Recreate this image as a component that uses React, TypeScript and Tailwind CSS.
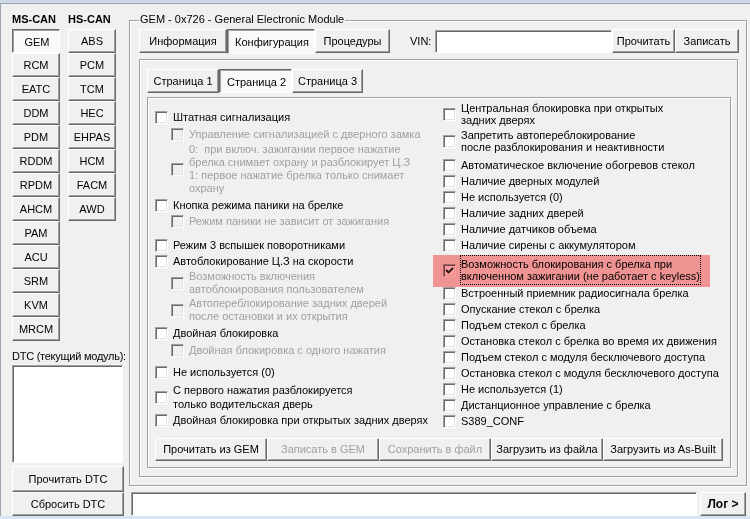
import React from 'react';

const raised =
  "bg-[#f0f0f0] border border-t-white border-l-white border-r-[#696969] border-b-[#696969] shadow-[inset_-1px_-1px_0_#a0a0a0]";
const pressed =
  "bg-[#f9f9f9] border border-t-[#696969] border-l-[#696969] border-r-white border-b-white shadow-[inset_1px_1px_0_#a0a0a0]";
const sunken =
  "bg-white border border-t-[#a0a0a0] border-l-[#a0a0a0] border-r-white border-b-white shadow-[inset_1px_1px_0_#696969]";
const etched = "border border-[#a0a0a0] shadow-[inset_1px_1px_0_#ffffff,1px_1px_0_#ffffff]";

function Btn({
  children,
  className = '',
  down = false,
  disabled = false,
}: {
  children: React.ReactNode;
  className?: string;
  down?: boolean;
  disabled?: boolean;
}) {
  return (
    <div
      className={`${down ? pressed : raised} flex items-center justify-center whitespace-nowrap shrink-0 ${
        disabled ? 'text-[#a0a0a0]' : 'text-black'
      } ${className}`}
    >
      {down ? <span className="translate-x-[1px] translate-y-[1px]">{children}</span> : children}
    </div>
  );
}

function Check({ checked = false, disabled = false }: { checked?: boolean; disabled?: boolean }) {
  return (
    <span
      className={`w-[13px] h-[13px] shrink-0 border border-t-[#a0a0a0] border-l-[#a0a0a0] border-r-white border-b-white shadow-[inset_1px_1px_0_#696969,inset_-1px_-1px_0_#e3e3e3] flex items-center justify-center ${
        disabled ? 'bg-[#f0f0f0]' : 'bg-white'
      }`}
    >
      {checked && (
        <svg width="9" height="9" viewBox="0 0 9 9">
          <path d="M1 4 L3.5 6.5 L8 2" stroke="#222" strokeWidth="1.8" fill="none" />
        </svg>
      )}
    </span>
  );
}

function Row({
  cls,
  lead = 'leading-[13px]',
  sub = false,
  dis = false,
  children,
}: {
  cls: string;
  lead?: string;
  sub?: boolean;
  dis?: boolean;
  children: React.ReactNode;
}) {
  return (
    <div className={`flex items-center gap-[5px] ${sub ? 'pl-[16px]' : ''} ${cls}`}>
      <Check disabled={dis} />
      <div className={`${lead} whitespace-pre ${dis ? 'text-[#a0a0a0]' : 'text-black'}`}>{children}</div>
    </div>
  );
}

const ms = ['GEM', 'RCM', 'EATC', 'DDM', 'PDM', 'RDDM', 'RPDM', 'AHCM', 'PAM', 'ACU', 'SRM', 'KVM', 'MRCM'];
const hs = ['ABS', 'PCM', 'TCM', 'HEC', 'EHPAS', 'HCM', 'FACM', 'AWD'];

const rightSingles1 = [
  'Наличие дверных модулей',
  'Не используется (0)',
  'Наличие задних дверей',
  'Наличие датчиков объема',
  'Наличие сирены с аккумулятором',
];
const rightSingles2 = [
  'Встроенный приемник радиосигнала брелка',
  'Опускание стекол с брелка',
  'Подъем стекол с брелка',
  'Остановка стекол с брелка во время их движения',
  'Подъем стекол с модуля бесключевого доступа',
  'Остановка стекол с модуля бесключевого доступа',
  'Не используется (1)',
  'Дистанционное управление с брелка',
  'S389_CONF',
];

export default function App() {
  return (
    <div className="w-[750px] h-[519px] bg-[#f0f0f0] flex flex-col overflow-hidden font-['Liberation_Sans',Arial,sans-serif] text-[11px] text-black">
      <div className="h-[3px] bg-[#cdd9e6] shrink-0" />
      <div className="flex-1 flex border-t border-l border-[#9aa6b2] min-h-0">
        {/* Left panel */}
        <div className="w-[128px] shrink-0 pl-[11px] pt-[9px] flex flex-col relative z-10">
          <div className="flex gap-[8px] h-[12px] leading-[12px] font-bold">
            <span className="w-[48px]">MS-CAN</span>
            <span>HS-CAN</span>
          </div>
          <div className="flex gap-[8px] mt-[4px] h-[312px]">
            <div className="flex flex-col w-[48px]">
              {ms.map((m, i) => (
                <Btn key={m} down={i === 0} className="h-[24px] w-[48px]">
                  {m}
                </Btn>
              ))}
            </div>
            <div className="flex flex-col w-[48px]">
              {hs.map((m) => (
                <Btn key={m} className="h-[24px] w-[48px]">
                  {m}
                </Btn>
              ))}
            </div>
          </div>
          <div className="mt-[9px] h-[12px] leading-[12px] whitespace-nowrap tracking-[-0.25px]">DTC (текущий модуль):</div>
          <div className={`mt-[3px] w-[111px] h-[98px] ${sunken}`} />
          <Btn className="mt-[3px] w-[112px] h-[26px]">Прочитать DTC</Btn>
          <Btn className="w-[112px] h-[24px]">Сбросить DTC</Btn>
        </div>

        {/* Right part */}
        <div className="flex-1 flex flex-col">
          <div className={`relative mt-[16px] w-[618px] h-[466px] ${etched} pl-[9px] pt-[8px]`}>
            <div className="absolute left-[9px] top-[-8px] px-[1px] bg-[#f0f0f0] leading-[13px] whitespace-nowrap">
              GEM - 0x726 - General Electronic Module
            </div>
            {/* top row */}
            <div className="flex items-center h-[24px]">
              <Btn className="w-[88px] h-[24px]">Информация</Btn>
              <Btn down className="w-[88px] h-[25px] self-start">
                Конфигурация
              </Btn>
              <Btn className="w-[75px] h-[24px]">Процедуры</Btn>
              <div className="ml-[20px] w-[22px] leading-[13px]">VIN:</div>
              <div className={`ml-[3px] w-[177px] h-[23px] ${sunken}`} />
              <Btn className="w-[63px] h-[24px]">Прочитать</Btn>
              <Btn className="w-[64px] h-[24px]">Записать</Btn>
            </div>
            {/* outer frame */}
            <div className={`mt-[6px] w-[599px] h-[418px] ${etched} pl-[7px] pt-[9px]`}>
              <div className="flex h-[24px]">
                <Btn className="w-[72px] h-[24px]">Страница 1</Btn>
                <Btn down className="w-[73px] h-[24px]">
                  Страница 2
                </Btn>
                <Btn className="w-[71px] h-[24px]">Страница 3</Btn>
              </div>
              {/* inner frame */}
              <div className={`mt-[4px] w-[584px] h-[371px] ${etched} pl-[7px]`}>
                <div className="flex h-[340px]">
                  {/* left column */}
                  <div className="w-[288px] pt-[11px] flex flex-col">
                    <Row cls="h-[16px]">Штатная сигнализация</Row>
                    <Row cls="h-[16px] mt-[1px]" sub dis>
                      Управление сигнализацией с дверного замка
                    </Row>
                    <Row cls="h-[52px] mt-[1px]" sub dis>
                      {'0:  при включ. зажигании первое нажатие\nбрелка снимает охрану и разблокирует Ц.З\n1: первое нажатие брелка только снимает\nохрану'}
                    </Row>
                    <Row cls="h-[16px] mt-[2px]">Кнопка режима паники на брелке</Row>
                    <Row cls="h-[16px]" sub dis>
                      Режим паники не зависит от зажигания
                    </Row>
                    <Row cls="h-[16px] mt-[8px]">Режим 3 вспышек поворотниками</Row>
                    <Row cls="h-[16px]">Автоблокирование Ц.З на скорости</Row>
                    <Row cls="h-[26px] mt-[1px]" sub dis>
                      {'Возможность включения\nавтоблокирования пользователем'}
                    </Row>
                    <Row cls="h-[26px] mt-[1px]" sub dis>
                      {'Автопереблокирование задних дверей\nпосле остановки и их открытия'}
                    </Row>
                    <Row cls="h-[16px] mt-[2px]">Двойная блокировка</Row>
                    <Row cls="h-[16px] mt-[1px]" sub dis>
                      Двойная блокировка с одного нажатия
                    </Row>
                    <Row cls="h-[16px] mt-[6px]">Не используется (0)</Row>
                    <Row cls="h-[28px] mt-[3px]" lead="leading-[14px]">
                      {'С первого нажатия разблокируется\nтолько водительская дверь'}
                    </Row>
                    <Row cls="h-[16px] mt-[1px]">Двойная блокировка при открытых задних дверях</Row>
                  </div>
                  {/* right column */}
                  <div className="flex-1 pt-[3px] flex flex-col">
                    <Row cls="h-[26px]" lead="leading-[12px]">
                      {'Центральная блокировка при открытых\nзадних дверях'}
                    </Row>
                    <Row cls="h-[26px] mt-[1px]" lead="leading-[12px]">
                      {'Запретить автопереблокирование\nпосле разблокирования и неактивности'}
                    </Row>
                    <Row cls="h-[16px] mt-[3px]">Автоматическое включение обогревов стекол</Row>
                    {rightSingles1.map((t) => (
                      <Row key={t} cls="h-[16px]">
                        {t}
                      </Row>
                    ))}
                    <div className="relative mt-[2px] h-[30px] flex items-center gap-[4px]">
                      <Check checked />
                      <div className="border border-dotted border-black py-[2px] leading-[12px] whitespace-pre">
                        {'Возможность блокирования с брелка при\nвключенном зажигании (не работает с keyless)'}
                      </div>
                      <div className="absolute left-[-10px] top-0 w-[277px] h-[32px] bg-[#ff9c9c] mix-blend-multiply" />
                    </div>
                    {rightSingles2.map((t) => (
                      <Row key={t} cls="h-[16px]">
                        {t}
                      </Row>
                    ))}
                  </div>
                </div>
                <div className="flex h-[23px]">
                  <Btn className="w-[112px] h-[23px]">Прочитать из GEM</Btn>
                  <Btn disabled className="w-[112px] h-[23px]">
                    Записать в GEM
                  </Btn>
                  <Btn disabled className="w-[112px] h-[23px]">
                    Сохранить в файл
                  </Btn>
                  <Btn className="w-[112px] h-[23px]">Загрузить из файла</Btn>
                  <Btn className="w-[120px] h-[23px]">Загрузить из As-Built</Btn>
                </div>
              </div>
            </div>
          </div>
          {/* log row */}
          <div className="mt-[6px] flex h-[24px]">
            <div className={`ml-[2px] w-[566px] h-[24px] ${sunken}`} />
            <Btn className="ml-[3px] w-[46px] h-[24px] font-bold text-[12px]">Лог &gt;</Btn>
          </div>
        </div>
      </div>
      <div className="h-[3px] bg-[#d6e4f3] shrink-0" />
    </div>
  );
}
